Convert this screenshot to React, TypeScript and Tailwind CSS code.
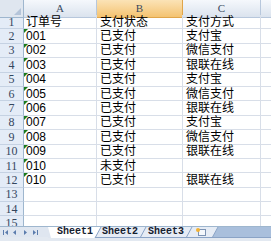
import React from 'react';

const rows: string[][] = [
  ['订单号', '支付状态', '支付方式'],
  ['001', '已支付', '支付宝'],
  ['002', '已支付', '微信支付'],
  ['003', '已支付', '银联在线'],
  ['004', '已支付', '支付宝'],
  ['005', '已支付', '微信支付'],
  ['006', '已支付', '银联在线'],
  ['007', '已支付', '支付宝'],
  ['008', '已支付', '微信支付'],
  ['009', '已支付', '银联在线'],
  ['010', '未支付', ''],
  ['010', '已支付', '银联在线'],
  ['', '', ''],
  ['', '', ''],
  ['', '', ''],
];

const cellFont = { fontFamily: '"Liberation Sans", "Noto Sans CJK SC", sans-serif' };
const headFont = { fontFamily: '"Liberation Serif", serif' };
const tabFont = { fontFamily: '"Liberation Mono", monospace' };

const NavButtons: React.FC = () => (
  <svg width="48" height="11" viewBox="0 0 48 11">
    <g fill="#5b7cad">
      <rect x="3" y="3" width="1" height="5" />
      <polygon points="8,3 8,8 5,5.5" />
      <polygon points="16,3 16,8 13,5.5" />
      <polygon points="24,3 24,8 27,5.5" />
      <polygon points="33,3 33,8 36,5.5" />
      <rect x="37" y="3" width="1" height="5" />
    </g>
  </svg>
);

const App: React.FC = () => {
  return (
    <div className="w-[271px] h-[241px] overflow-hidden flex flex-col bg-white">
      {/* Grid */}
      <div className="h-[226px] overflow-hidden">
        <div className="grid grid-cols-[24px_73px_86px_78px_1fr] h-[15px]">
          <div className="relative bg-[#dfe6ef] border-r border-b border-[#9eb6ce]">
            <svg className="absolute right-[2px] bottom-[2px]" width="7" height="7" viewBox="0 0 7 7">
              <polygon points="7,0 7,7 0,7" fill="#b4c4d9" />
            </svg>
          </div>
          <div className="flex items-center justify-center bg-gradient-to-b from-[#f5f8fc] to-[#dbe3ee] border-r border-b border-[#b7c7dc] text-[11px] text-[#3a4a60]" style={headFont}>A</div>
          <div className="flex items-center justify-center bg-gradient-to-b from-[#fbe3b6] to-[#f4c370] border-r border-b border-[#e0a54a] text-[11px] text-[#3a4a60]" style={headFont}>B</div>
          <div className="flex items-center justify-center bg-gradient-to-b from-[#f5f8fc] to-[#dbe3ee] border-r border-b border-[#b7c7dc] text-[11px] text-[#3a4a60]" style={headFont}>C</div>
          <div className="bg-gradient-to-b from-[#f5f8fc] to-[#dbe3ee] border-b border-[#b7c7dc]" />
        </div>
        {rows.map((r, i) => (
          <div key={i} className="grid grid-cols-[24px_73px_86px_78px_1fr] h-[14.4px]">
            <div className="flex items-center justify-center bg-[#e4ecf7] border-r border-r-[#9eb6ce] border-b border-b-[#c5d2e3] text-[12px] leading-none text-[#34465e]" style={headFont}>{i + 1}</div>
            <div className="relative flex items-center pl-[2px] border-r border-b border-[#d8dee8] text-[12px] leading-none text-black" style={cellFont}>
              {i >= 1 && i <= 11 && (
                <div className="absolute left-0 top-0 w-0 h-0 border-t-[4px] border-r-[4px] border-t-[#1a7a1a] border-r-transparent" />
              )}
              {r[0]}
            </div>
            <div className="flex items-center pl-[3px] border-r border-b border-[#d8dee8] text-[12px] leading-none text-black" style={cellFont}>{r[1]}</div>
            <div className="flex items-center pl-[3px] border-r border-b border-[#d8dee8] text-[12px] leading-none text-black" style={cellFont}>{r[2]}</div>
            <div className="border-b border-[#d8dee8]" />
          </div>
        ))}
      </div>

      {/* Sheet tabs */}
      <div className="h-[11px] flex border-t border-[#9eb6ce] bg-[#dfe6f0]">
        <div className="w-[48px] shrink-0 flex items-center">
          <NavButtons />
        </div>
        <div className="relative flex-1 flex">
          <svg className="absolute inset-0" width="223" height="11" viewBox="0 0 223 11">
            <rect x="0" y="0" width="223" height="11" fill="#dfe6f0" />
            <polygon points="170,0 223,0 223,11 164,11" fill="#a9bfdc" />
            <polygon points="53,0 98,0 92,11 47,11" fill="#e6ecf5" />
            <polygon points="98,0 144,0 138,11 92,11" fill="#e6ecf5" />
            <polygon points="144,0 170,0 164,11 138,11" fill="#e6ecf5" />
            <polygon points="0,0 53,0 47,11 3,11" fill="#ffffff" />
            <g stroke="#8aa3c6" strokeWidth="1" fill="none">
              <line x1="47" y1="11" x2="53" y2="0" />
              <line x1="92" y1="11" x2="98" y2="0" />
              <line x1="138" y1="11" x2="144" y2="0" />
              <line x1="164" y1="11" x2="170" y2="0" />
              <line x1="47" y1="10.5" x2="223" y2="10.5" />
            </g>
          </svg>
          <div className="relative flex items-center h-full">
            <div className="w-[54px] pl-[9px] text-[10px] leading-none font-semibold text-[#16202e]" style={tabFont}>Sheet1</div>
            <div className="w-[46px] text-[10px] leading-none font-semibold text-[#16202e]" style={tabFont}>Sheet2</div>
            <div className="w-[47px] text-[10px] leading-none font-semibold text-[#16202e]" style={tabFont}>Sheet3</div>
            <svg width="12" height="10" viewBox="0 0 12 10">
              <rect x="3.5" y="2.5" width="7" height="6" fill="#f4f7fb" stroke="#7d93b3" />
              <circle cx="3" cy="3" r="2" fill="#f2b233" />
            </svg>
          </div>
        </div>
      </div>
      <div className="h-[4px] bg-[#e3e9f1]" />
    </div>
  );
};

export default App;
